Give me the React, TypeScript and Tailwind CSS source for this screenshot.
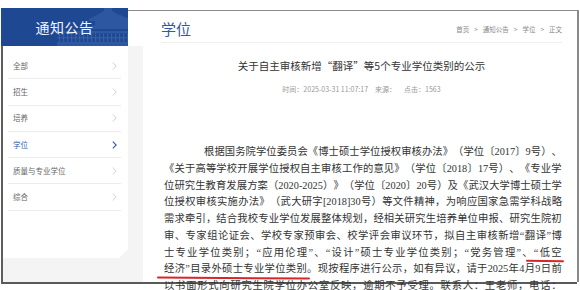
import React from "react";

function Chevron({ active }: { active?: boolean }) {
  return (
    <svg width="5" height="8" viewBox="0 0 5 8" className="shrink-0">
      <polyline
        points="0.8,0.6 4.2,4 0.8,7.4"
        fill="none"
        stroke={active ? "#2b5bab" : "#c4c4c4"}
        strokeWidth={active ? 1.1 : 0.8}
      />
    </svg>
  );
}

function Building() {
  return (
    <svg
      width="127"
      height="38"
      viewBox="0 0 127 38"
      className="absolute left-0 top-0"
    >
      <g fill="#3a64ad" opacity="0.55">
        <polygon points="88,11 98,6 104,2 110,2 116,6 127,10 127,13 88,13" />
        <rect x="103" y="0" width="8" height="3" />
        <rect x="94" y="13" width="33" height="6" />
        <polygon points="80,20 94,17 127,17 127,21 80,21" />
        <rect x="56" y="23" width="71" height="2" />
        <rect x="56" y="29" width="71" height="1.5" />
        <rect x="56" y="34" width="71" height="4" />
      </g>
      <g fill="#4a72b8" opacity="0.5">
        {Array.from({ length: 18 }).map((_, i) => (
          <rect key={i} x={58 + i * 4} y={25} width="1.2" height="9" />
        ))}
      </g>
    </svg>
  );
}

const tokenize = (s: string) => s.match(/[0-9A-Za-z\-\[\]]+|./gu) || [];

const lines: { text: string; mark?: { left: number; width: number } }[] = [
  { text: "根据国务院学位委员会《博士硕士学位授权审核办法》（学位〔2017〕9号）、" },
  { text: "《关于高等学校开展学位授权自主审核工作的意见》（学位〔2018〕17号）、《专业学" },
  { text: "位研究生教育发展方案（2020-2025）》（学位〔2020〕20号）及《武汉大学博士硕士学" },
  { text: "位授权审核实施办法》（武大研字[2018]30号）等文件精神，为响应国家急需学科战略" },
  { text: "需求牵引，结合我校专业学位发展整体规划，经相关研究生培养单位申报、研究生院初" },
  { text: "审、专家组论证会、学校专家预审会、校学评会审议环节，拟自主审核新增“翻译”博" },
  {
    text: "士专业学位类别；“应用伦理”、“设计”硕士专业学位类别；“党务管理”、“低空",
    mark: { left: 362, width: 38 },
  },
  {
    text: "经济”目录外硕士专业学位类别。现按程序进行公示，如有异议，请于2025年4月9日前",
    mark: { left: -7, width: 153 },
  },
  { text: "以书面形式向研究生院学位办公室反映，逾期不予受理。联系人：王老师，电话：" },
];

export default function App() {
  const items = [
    { t: "全部" },
    { t: "招生" },
    { t: "培养" },
    { t: "学位", active: true },
    { t: "质量与专业学位" },
    { t: "综合" },
  ];

  return (
    <div className="w-[580px] h-[290px] overflow-hidden bg-white font-['Noto_Sans_CJK_SC',sans-serif]">
      <div className="mt-[8px] ml-[1px] w-[576px] h-[276px] flex border-b-2 border-[#5a5a5a]">
        {/* sidebar */}
        <aside className="w-[127px] shrink-0 flex flex-col">
          <div className="h-[38px] bg-[#1f4893] relative flex items-center justify-center overflow-hidden">
            <Building />
            <span className="relative text-[14px] leading-none text-[#f2f5fb] tracking-[0.5px]">
              通知公告
            </span>
          </div>
          <div className="flex-1 border-l-2 border-[#5e5e5e] bg-[#f4f4f4]">
            <div className="h-[212px] bg-white pt-[7px] [clip-path:polygon(0_0,100%_0,100%_calc(100%-9px),calc(100%-9px)_100%,0_100%)]">
              {items.map((it) => (
                <div
                  key={it.t}
                  className="ml-[5px] mr-[7px] h-[26.3px] border-b border-[#ececec] flex items-center justify-between pl-[5px] pr-[4px]"
                >
                  <span
                    className={
                      "text-[7.5px] leading-none " +
                      (it.active ? "text-[#2b5bab]" : "text-[#666666]")
                    }
                  >
                    {it.t}
                  </span>
                  <Chevron active={it.active} />
                </div>
              ))}
            </div>
          </div>
        </aside>

        {/* main */}
        <main className="flex-1 mt-[2px] border-t border-r-2 border-[#8a8a8a] flex">
          <div className="w-[15px] shrink-0 mt-[35px] bg-[#f4f4f4]" />
          <div className="flex-1 pl-[18px] pr-[15px]">
            <div className="h-[32px] flex items-end justify-between pb-[3px] border-b border-[#efefef]">
              <span className="text-[15px] leading-[20px] text-[#2d59a6]">学位</span>
              <span className="text-[6.5px] leading-[20px] text-[#888] flex items-center">
                首页<span className="mx-[5px]">&gt;</span>通知公告
                <span className="mx-[5px]">&gt;</span>学位
                <span className="mx-[5px]">&gt;</span>正文
              </span>
            </div>
            <div className="mt-[15px] text-center text-[10.5px] leading-[16px] text-[#333]">
              关于自主审核新增“翻译”等5个专业学位类别的公示
            </div>
            <div className="mt-[10px] text-center text-[7px] leading-[10px] text-[#999] font-['Noto_Sans_CJK_SC','Liberation_Sans',sans-serif]">
              <span className="mr-[2px]">时间：2025-03-31 11:07:17</span>
              <span className="ml-[5px]">来源：</span>
              <span className="ml-[8px]">点击：1563</span>
            </div>
            <div className="mt-[50px] ml-[3px] w-[398px] text-[10.3px] text-[#333] font-['Liberation_Serif','Noto_Sans_CJK_SC',serif]">
              {lines.map((l, i) => (
                <div
                  key={i}
                  className={
                    "relative h-[16.75px] leading-[16.75px] flex justify-between whitespace-nowrap " +
                    (i === 0 ? "pl-[40px]" : "")
                  }
                >
                  {tokenize(l.text).map((t, j) => (
                    <span key={j}>{t}</span>
                  ))}
                  {l.mark && (
                    <span
                      className="absolute bottom-[-1px] h-[2px] rounded-full bg-[#d6262b] rotate-[0.4deg]"
                      style={{ left: l.mark.left, width: l.mark.width }}
                    />
                  )}
                </div>
              ))}
            </div>
          </div>
        </main>
      </div>
    </div>
  );
}
